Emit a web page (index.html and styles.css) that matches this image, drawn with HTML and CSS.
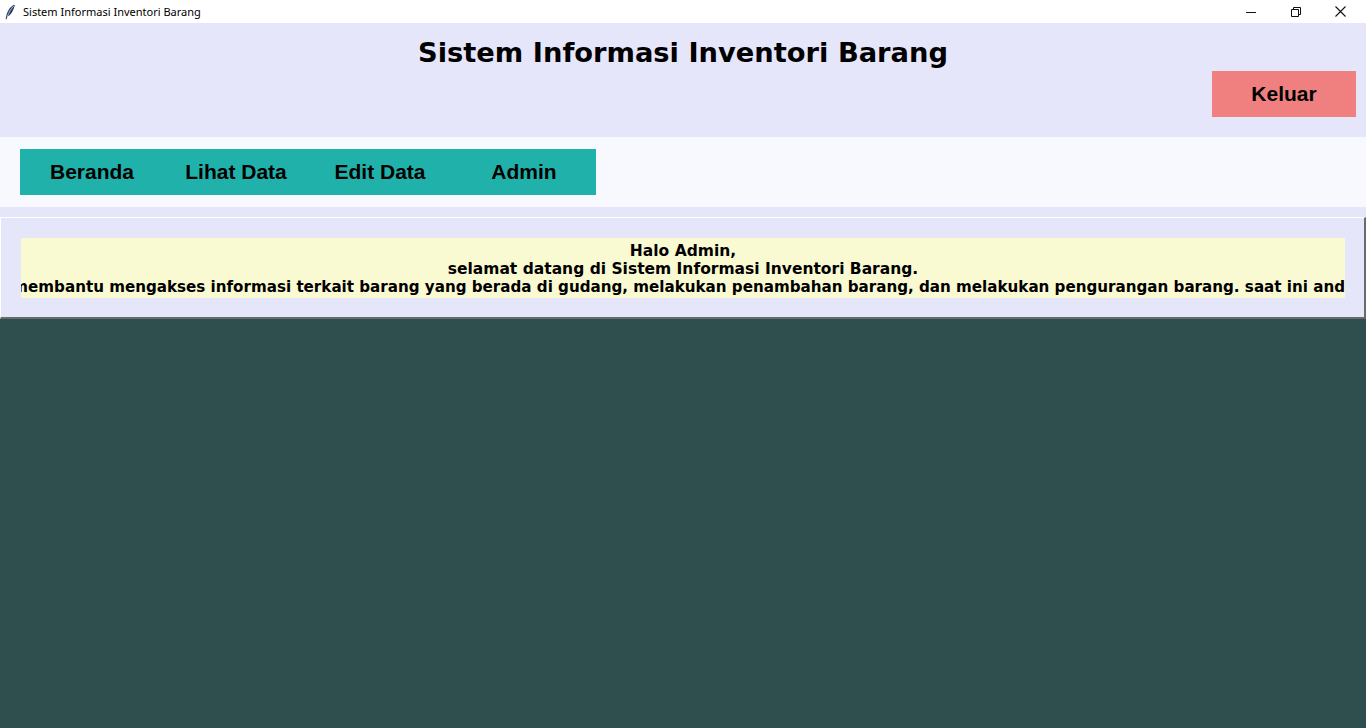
FILE: index.html
```html
<!DOCTYPE html>
<html lang="id">
<head>
<meta charset="utf-8">
<title>Sistem Informasi Inventori Barang</title>
<link rel="stylesheet" href="styles.css">
</head>
<body>
<div class="titlebar">
  <svg class="app-icon" width="12" height="16" viewBox="0 0 12 16">
    <path d="M10.5 0.8 C7 2 3.5 6 2.2 12.2 L1.6 15.2 L2.6 15.3 L3.4 12.6 C6.5 11.5 9.5 7 10.8 1.2 Z" fill="#2d3e66"/>
    <path d="M9.6 2.2 C7 4.5 4.8 8.5 3.4 12.6" stroke="#cfd6e6" stroke-width="0.8" fill="none"/>
  </svg>
  <span class="window-title">Sistem Informasi Inventori Barang</span>
  <div class="controls">
    <span class="ctl"><svg width="10" height="10" viewBox="0 0 10 10"><path d="M0 5.5 H10" stroke="#111" stroke-width="1"/></svg></span>
    <span class="ctl"><svg width="10" height="10" viewBox="0 0 10 10"><path d="M0.5 2.5 H7.5 V9.5 H0.5 Z M2.5 2.5 V0.5 H9.5 V7.5 H7.5" stroke="#111" stroke-width="1" fill="none"/></svg></span>
    <span class="ctl"><svg width="11" height="11" viewBox="0 0 11 11"><path d="M0.5 0.5 L10.5 10.5 M10.5 0.5 L0.5 10.5" stroke="#111" stroke-width="1.1"/></svg></span>
  </div>
</div>
<header class="header">
  <h1 class="title">Sistem Informasi Inventori Barang</h1>
  <button class="logout">Keluar</button>
</header>
<nav class="navarea">
  <div class="navbar">
    <button class="navbtn">Beranda</button>
    <button class="navbtn">Lihat Data</button>
    <button class="navbtn">Edit Data</button>
    <button class="navbtn">Admin</button>
  </div>
</nav>
<main class="content">
  <section class="panel">
    <div class="welcome">
      <div class="line">Halo Admin,</div>
      <div class="line">selamat datang di Sistem Informasi Inventori Barang.</div>
      <div class="line clip"><span>Aplikasi ini membantu mengakses informasi terkait barang yang berada di gudang, melakukan penambahan barang, dan melakukan pengurangan barang. saat ini and</span></div>
    </div>
  </section>
</main>
</body>
</html>
```

FILE: styles.css
```css
html, body {
  margin: 0;
  padding: 0;
}
body {
  background: #2f4f4f;
  width: 1366px;
  height: 728px;
  overflow: hidden;
  font-family: "DejaVu Sans", Verdana, sans-serif;
}
.titlebar {
  height: 23px;
  background: #ffffff;
  display: flex;
  align-items: center;
}
.app-icon {
  margin-left: 4px;
  margin-right: 7px;
}
.window-title {
  font-family: "Noto Sans", "Open Sans", sans-serif;
  font-size: 11px;
  color: #000;
}
.controls {
  margin-left: auto;
  display: flex;
  height: 23px;
  padding-right: 3px;
}
.ctl {
  width: 45px;
  display: flex;
  align-items: center;
  justify-content: center;
}
.header {
  background: #e6e6fa;
  height: 114px;
  box-sizing: border-box;
  padding-top: 14px;
  display: flex;
  flex-direction: column;
}
.title {
  margin: 0;
  text-align: center;
  font-family: "DejaVu Sans", Verdana, sans-serif;
  font-weight: bold;
  font-size: 27.3px;
  line-height: 32px;
  color: #000;
}
.logout {
  align-self: flex-end;
  margin: 2px 10px 0 0;
  width: 144px;
  height: 46px;
  border: none;
  background: #f08080;
  font-family: "Liberation Sans", Arial, sans-serif;
  font-weight: bold;
  font-size: 21px;
  color: #000;
  padding: 0;
}
.navarea {
  background: #f8f8ff;
  height: 70px;
  box-sizing: border-box;
  padding: 12px 20px;
}
.navbar {
  display: flex;
  width: 576px;
  height: 46px;
  background: #20b2aa;
}
.navbtn {
  width: 144px;
  height: 46px;
  border: none;
  background: transparent;
  font-family: "Liberation Sans", Arial, sans-serif;
  font-weight: bold;
  font-size: 21px;
  color: #000;
  padding: 0;
}
.content {
  background: #e6e6fa;
  padding-top: 10px;
}
.panel {
  background: #e6e6fa;
  border-style: solid;
  border-width: 1px 2px 2px 1px;
  border-color: #ffffff #696969 #696969 #ffffff;
  padding: 20px 19px 19px 20px;
}
.welcome {
  background: #fafad2;
  padding: 4px 0 2px;
  font-family: "DejaVu Sans", Verdana, sans-serif;
  font-weight: bold;
  font-size: 15.5px;
  line-height: 18px;
  color: #000;
  text-align: center;
}
.line {
  white-space: nowrap;
}
.clip {
  overflow: hidden;
  display: flex;
  justify-content: flex-end;
  font-size: 15.13px;
}
.clip span {
  flex: none;
}
```
